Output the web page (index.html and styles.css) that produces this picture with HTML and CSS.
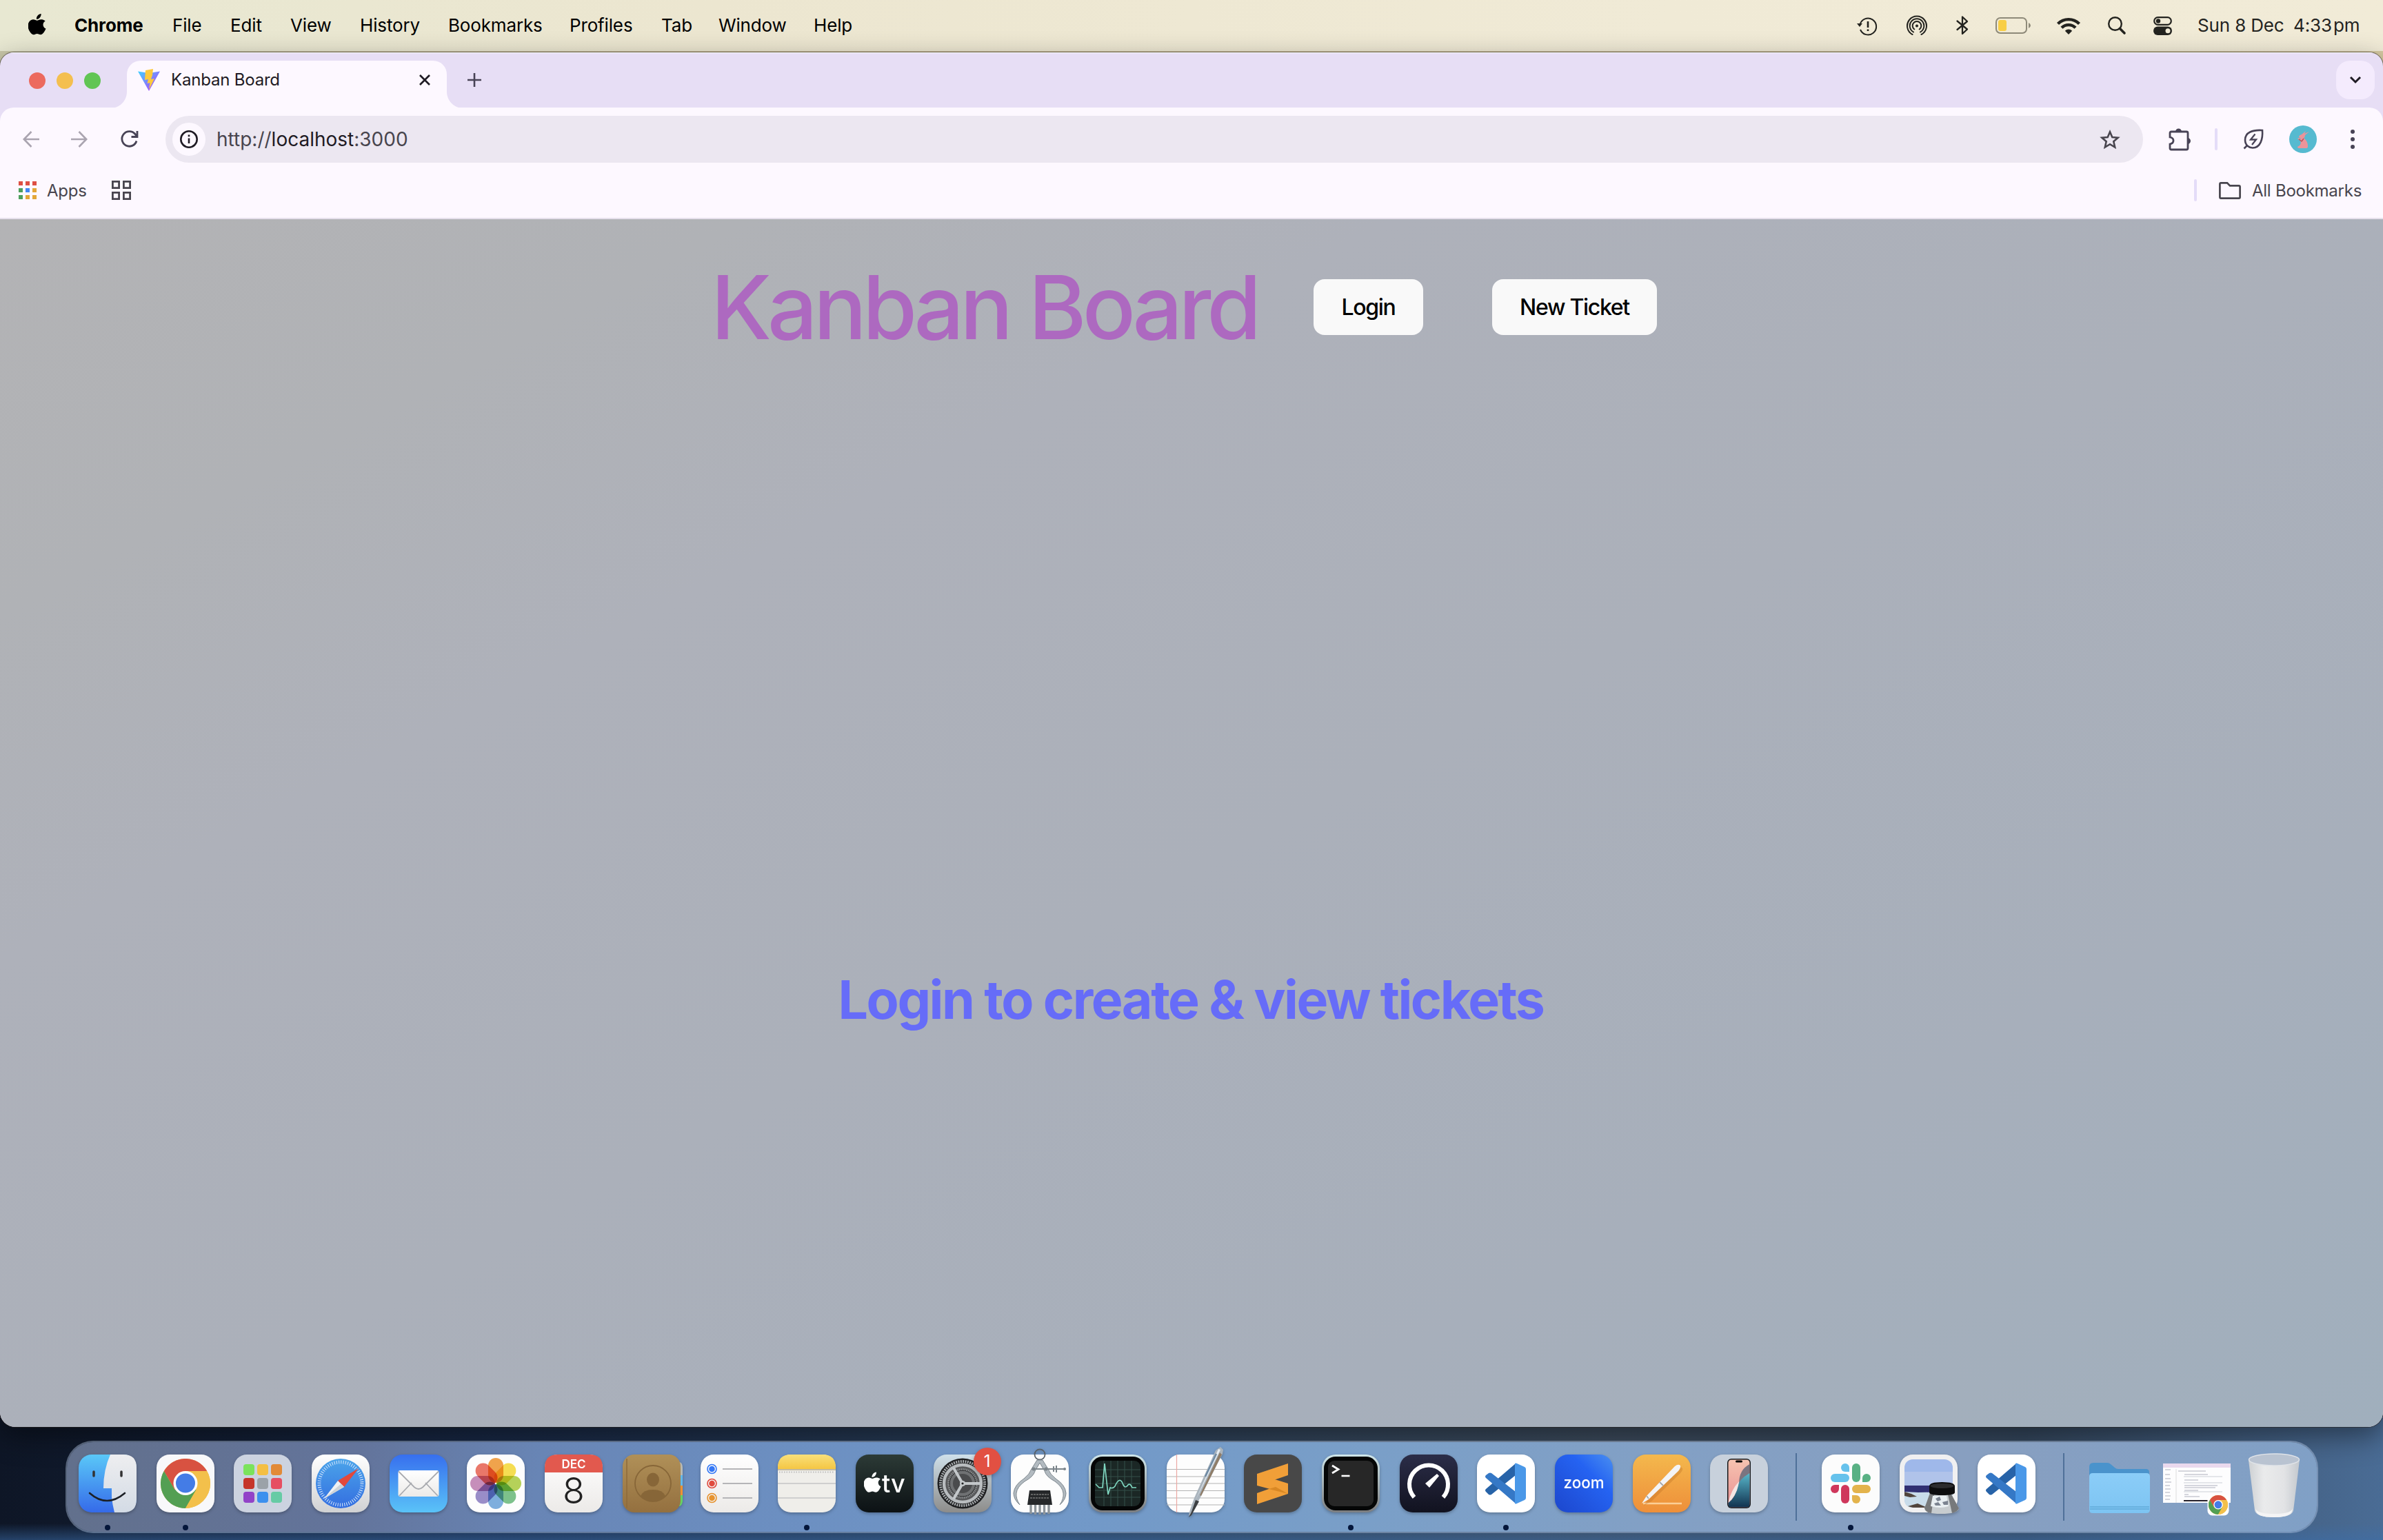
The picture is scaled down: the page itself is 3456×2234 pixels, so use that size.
FILE: index.html
```html
<!DOCTYPE html>
<html lang="en">
<head>
<meta charset="utf-8">
<title>Kanban Board</title>
<link rel="stylesheet" href="styles.css">
</head>
<body>
<svg class="defs" aria-hidden="true">
  <defs>
    <symbol id="apple" viewBox="0 0 26 31"><path d="M18.6 0c.2 2.100-.6 4-1.800 5.400-1.200 1.400-3.100 2.400-4.900 2.300-.2-2 .7-4 1.800-5.200C14.900 1.100 16.900.1 18.600 0zM24.700 10.500c-2 1.200-3.200 3-3.200 5.300 0 2.700 1.600 4.900 4 5.800-.5 1.600-1.300 3.100-2.300 4.500-1.400 2.100-2.800 4.100-5 4.100-2.200.1-2.900-1.300-5.400-1.300s-3.300 1.300-5.300 1.400c-2.200.1-3.800-2.200-5.200-4.200C-.5 22-1.700 16.100 1.200 11.800 2.500 9.600 4.900 8.200 7.300 8.200c2.100 0 4.200 1.500 5.500 1.500s3.700-1.800 6.300-1.500c1.100 0 4 .4 5.600 2.300z"/></symbol>
    <symbol id="chrome" viewBox="0 0 72 72">
      <circle cx="36" cy="36" r="36" fill="#f3c04b"/>
      <path d="M4.800 18A36 36 0 0 1 67.200 18H36L20.400 45z" fill="#d85241"/>
      <path d="M4.800 18A36 36 0 0 0 36 72L51.600 45H20.400z" fill="#539f53"/>
      <path d="M36 72L51.600 45L36 18H67.200A36 36 0 0 1 36 72z" fill="#f3c04b"/>
      <circle cx="36" cy="35.500" r="17.500" fill="#fff"/><circle cx="36" cy="35.500" r="14" fill="#447ce6"/>
    </symbol>
    <symbol id="vscode" viewBox="0 0 84 84">
      <path d="M56 13L13 50q-2 2 0 4l4 4q2 1 4 0L56 30z" fill="#2763a8"/>
      <path d="M56 71L13 34q-2-2 0-4l4-3q2-1 4 0L56 54z" fill="#3578c6"/>
      <path d="M55 13q1-1 3 0l11 5q2 1 2 3v42q0 2-2 3l-11 5q-2 1-3 0z" fill="#4a98e8"/>
    </symbol>
    <linearGradient id="gBlue" x2="0" y2="1"><stop stop-color="#5ac8f8"/><stop offset="1" stop-color="#356ae9"/></linearGradient>
    <linearGradient id="gMail" x2="0" y2="1"><stop stop-color="#376fee"/><stop offset="1" stop-color="#5ac3f8"/></linearGradient>
    <linearGradient id="gWhite" x2="0" y2="1"><stop stop-color="#fff"/><stop offset="1" stop-color="#eceae8"/></linearGradient>
    <linearGradient id="gSilver" x2="0" y2="1"><stop stop-color="#fff"/><stop offset="1" stop-color="#d0d1d3"/></linearGradient>
    <linearGradient id="gFace" x2="0" y2="1"><stop stop-color="#eeeef0"/><stop offset="1" stop-color="#d3dbe5"/></linearGradient>
    <linearGradient id="gSafari" x2="0" y2="1"><stop stop-color="#4ba4ea"/><stop offset="1" stop-color="#346ee0"/></linearGradient>
    <linearGradient id="gBrown" x2="0" y2="1"><stop stop-color="#b09058"/><stop offset="1" stop-color="#94703f"/></linearGradient>
    <linearGradient id="gYellow" x2="0" y2="1"><stop stop-color="#f9e07a"/><stop offset="1" stop-color="#f5c643"/></linearGradient>
    <linearGradient id="gTv" x2="0" y2="1"><stop stop-color="#2c3a36"/><stop offset="1" stop-color="#0c1114"/></linearGradient>
    <linearGradient id="gGear" x2="0" y2="1"><stop stop-color="#cfe0ea"/><stop offset="1" stop-color="#8d8c8a"/></linearGradient>
    <linearGradient id="gRim" x2="0" y2="1"><stop stop-color="#cfe6ea"/><stop offset="1" stop-color="#7b7d80"/></linearGradient>
    <linearGradient id="gNavy" x2="0" y2="1"><stop stop-color="#2b2d48"/><stop offset="1" stop-color="#11121f"/></linearGradient>
    <linearGradient id="gZoom" x1="1" y1="0" x2="0" y2="1"><stop stop-color="#4a8ff0"/><stop offset=".35" stop-color="#2563f2"/><stop offset="1" stop-color="#1c46cc"/></linearGradient>
    <linearGradient id="gOrange" x2="0" y2="1"><stop stop-color="#f4b84d"/><stop offset="1" stop-color="#ee8f39"/></linearGradient>
    <linearGradient id="gFolder" x2="0" y2="1"><stop stop-color="#8bcdf8"/><stop offset="1" stop-color="#7dc4f2"/></linearGradient>
    <linearGradient id="gTrash"><stop stop-color="#cdd0d3"/><stop offset=".3" stop-color="#eaebec"/><stop offset=".7" stop-color="#e2e3e5"/><stop offset="1" stop-color="#c3c8ce"/></linearGradient>
    <linearGradient id="gVite" x2="1" y2="1"><stop stop-color="#41d1ff"/><stop offset="1" stop-color="#bd34fe"/></linearGradient>
    <linearGradient id="gPhone" x2="0" y2="1"><stop stop-color="#f6c3b0"/><stop offset="1" stop-color="#e98f93"/></linearGradient>
    <linearGradient id="gSea" x2="0" y2="1"><stop stop-color="#58b7cb"/><stop offset="1" stop-color="#123350"/></linearGradient>
  </defs>
</svg>

<header class="menubar">
  <nav class="menus">
    <svg class="apple" width="26" height="31"><use href="#apple"/></svg>
    <span class="app">Chrome</span><span>File</span><span>Edit</span><span>View</span><span>History</span><span>Bookmarks</span><span>Profiles</span><span>Tab</span><span>Window</span><span>Help</span>
  </nav>
  <div class="status">
    <svg width="30" height="30" viewBox="0 0 30 30" fill="none" stroke="#23231f" stroke-width="2"><path d="M4.500 13.500A12 12 0 1 1 5 21"/><path d="M0 12h8l-4 5z" fill="#23231f" stroke="none"/><path d="M16 9v9M16 20.500v2.500" stroke-width="2.600"/></svg>
    <svg width="32" height="30" viewBox="0 0 32 30" fill="none" stroke="#23231f" stroke-width="2" stroke-linecap="round"><path d="M9.500 28A14 14 0 1 1 22.500 28M11 24.500A10.300 10.300 0 1 1 21 24.500M12.300 20.500a6.300 6.300 0 1 1 7.400 0"/><circle cx="16" cy="15.500" r="1.600" fill="#23231f" stroke-width="1"/></svg>
    <svg width="18" height="28" viewBox="0 0 18 28" fill="none" stroke="#23231f" stroke-width="2.300" stroke-linejoin="round" stroke-linecap="round"><path d="M1.500 7.500L16 19.500 9 26V1.500L16 8 1.500 20"/></svg>
    <svg width="52" height="24" viewBox="0 0 52 24"><rect x="1" y="1" width="44" height="22" rx="6" fill="none" stroke="#8e8a79" stroke-width="2"/><rect x="4" y="4" width="12" height="16" rx="3" fill="#f8ce45"/><path d="M48 8q3 1.500 3 4t-3 4z" fill="#8e8a79"/></svg>
    <svg width="34" height="25" viewBox="0 0 34 25" fill="none" stroke="#23231f" stroke-width="4.400"><path d="M1.500 9.500a22 22 0 0 1 31 0M7 15.200a14.200 14.200 0 0 1 20 0"/><path d="M17 25l-5.200-5.200a7.300 7.300 0 0 1 10.400 0z" fill="#23231f" stroke="none"/></svg>
    <svg width="26" height="26" viewBox="0 0 26 26" fill="none" stroke="#23231f"><circle cx="10.500" cy="10.500" r="9.300" stroke-width="2.400"/><path d="M17.500 17.500l6.500 6.500" stroke-width="3.600" stroke-linecap="round"/></svg>
    <svg width="27" height="27" viewBox="0 0 27 27"><rect x="1.200" y="1.200" width="24.600" height="10.600" rx="5.300" fill="none" stroke="#23231f" stroke-width="2.200"/><circle cx="7" cy="6.500" r="3.200" fill="#23231f"/><rect y="14.500" width="27" height="12.500" rx="6.200" fill="#23231f"/><circle cx="21" cy="20.700" r="3.500" fill="#f0ead6"/></svg>
    <span class="date">Sun 8 Dec</span><span class="time">4:33 pm</span>
  </div>
</header>

<main class="window">
  <div class="tabstrip">
    <div class="lights"><i class="red"></i><i class="amber"></i><i class="green"></i></div>
    <div class="tab">
      <svg width="32" height="32" viewBox="0 0 32 32"><path d="M0 3.500L16 32 32 3.500 16 6z" fill="url(#gVite)"/><path d="M22 0l-11 2-1 14 5-1-1.500 6 4-1L16 30l8-16-5 1 2-6z" fill="#fdca3d"/></svg>
      <span class="title">Kanban Board</span>
      <svg width="16" height="16" viewBox="0 0 16 16" stroke="#1f1b24" stroke-width="2.700"><path d="M1 1l14 14M15 1L1 15"/></svg>
    </div>
    <svg class="plus" width="20" height="20" viewBox="0 0 20 20" stroke="#484356" stroke-width="2.600"><path d="M10 0v20M0 10h20"/></svg>
    <div class="tabsearch"><svg width="18" height="12" viewBox="0 0 18 12" fill="none" stroke="#1f1b24" stroke-width="3"><path d="M2 2l7 7 7-7"/></svg></div>
  </div>

  <div class="toolbar">
    <svg width="24" height="24" viewBox="0 0 24 24" fill="none" stroke="#aaa4b0" stroke-width="2.600"><path d="M24 12H2M12.500 1L1.800 12l10.700 11"/></svg>
    <svg width="24" height="24" viewBox="0 0 24 24" fill="none" stroke="#aaa4b0" stroke-width="2.600"><path d="M0 12h22M11.500 1l10.700 11-10.700 11"/></svg>
    <svg width="26" height="26" viewBox="0 0 26 26" fill="none" stroke="#484356" stroke-width="2.800"><path d="M23 15.500A10.800 10.800 0 1 1 21 5.500L23.500 8.500"/><path d="M24 1v8.500h-8.500"/></svg>
    <div class="omnibox">
      <div class="info"><svg width="28" height="28" viewBox="0 0 28 28"><circle cx="14" cy="14" r="11.700" fill="none" stroke="#1f1b24" stroke-width="2.600"/><path d="M14 12.500v7.500M14 7.500v2.800" stroke="#1f1b24" stroke-width="2.600"/></svg></div>
      <div class="url">http://<b>localhost</b>:3000</div>
      <svg width="30" height="29" viewBox="0 0 30 29" fill="none" stroke="#48454e" stroke-width="2.600"><path d="M15 3.300l3.300 7.800 8.300.7-6.300 5.500 1.900 8.200L15 21.200l-7.200 4.300 1.900-8.200-6.300-5.500 8.300-.7z"/></svg>
    </div>
    <svg class="ext" width="34" height="34" viewBox="0 0 34 34"><path d="M5 6h22q2 0 2 2v22q0 2-2 2H5q-2 0-2-2v-6q5-1 5-5t-5-5V8q0-2 2-2z" fill="none" stroke="#484356" stroke-width="2.800"/><path d="M11 6a4.500 4.500 0 0 1 9 0zM28.500 15a4.500 4.500 0 0 1 0 9z" fill="#484356"/></svg>
    <i class="rule"></i>
    <svg class="leaf" width="30" height="30" viewBox="0 0 30 30" fill="none" stroke="#484356" stroke-width="2.600"><path d="M28 2C14 1 3 5 3 16c0 8 6 11.500 11 11.500C25 27.500 29 15 28 2zM6.500 23.500L1.500 28.500"/><path d="M17.500 7.500l-6.500 8h8l-6 7.500" stroke-width="2.300"/></svg>
    <svg class="avatar" width="40" height="40" viewBox="0 0 40 40"><circle cx="20" cy="20" r="20" fill="#56bad0"/><path d="M14 17q0-3 4-4l6-5-2 4 7-3-6 5q0 3-2 4 6 5 6 12 0 3-2 3H15q-3 0-3-2l3-2q3-3 1-7l-4-3 2-1 3 2-1-2z" fill="#eb949a"/><path d="M14 20l4 3 3-4" fill="none" stroke="#b8525b" stroke-width="1.500"/></svg>
    <svg class="kebab" width="6" height="30" viewBox="0 0 6 30" fill="#484356"><circle cx="3" cy="4" r="3"/><circle cx="3" cy="15" r="3"/><circle cx="3" cy="26" r="3"/></svg>
  </div>

  <div class="bookmarks">
    <svg width="26" height="26" viewBox="0 0 26 26"><path d="M0 0h6v6H0zM10 0h6v6h-6zM20 0h6v6h-6z" fill="#de5044"/><path d="M0 10h6v6H0zM0 20h6v6H0z" fill="#4e9f5c"/><path d="M10 10h6v6h-6z" fill="#4387f4"/><path d="M20 10h6v6h-6zM10 20h6v6h-6zM20 20h6v6h-6z" fill="#e3a738"/></svg>
    <span class="apps">Apps</span>
    <svg width="28" height="28" viewBox="0 0 28 28" fill="none" stroke="#48454e" stroke-width="2.800"><path d="M1.400 1.400h9.200v9.200H1.400zM17.400 1.400h9.200v9.200h-9.200zM1.400 17.400h9.200v9.200H1.400zM17.400 17.400h9.200v9.200h-9.200z"/></svg>
    <i class="rule"></i>
    <svg class="folder" width="32" height="25" viewBox="0 0 32 25" fill="none" stroke="#48454e" stroke-width="2.700"><path d="M3 1.400h9l4 4h13q1.600 0 1.600 1.600v15q0 1.600-1.600 1.600H3q-1.600 0-1.600-1.600V3Q1.400 1.400 3 1.400z"/></svg>
    <span class="all">All Bookmarks</span>
  </div>

  <section class="page">
    <div class="head">
      <h1>Kanban Board</h1>
      <button class="login">Login</button>
      <button class="ticket">New Ticket</button>
    </div>
    <h2>Login to create &amp; view tickets</h2>
  </section>
</main>

<footer class="dockarea">
  <div class="dock">
    <div class="item run"><svg viewBox="0 0 84 84"><rect width="84" height="84" rx="19" fill="url(#gBlue)"/><path d="M46 0h19q19 0 19 19v46q0 19-19 19H52q-3-12-4-22V49H36q0-27 10-49z" fill="url(#gFace)"/><path d="M22 25v6M62 25v6" stroke="#333" stroke-width="3.500" stroke-linecap="round"/><path d="M16 56q25 22 51 0" fill="none" stroke="#1c2026" stroke-width="2.600" stroke-linecap="round"/></svg></div>
    <div class="item run"><svg viewBox="0 0 84 84"><rect width="84" height="84" rx="19" fill="#f8f8fa"/><use href="#chrome" x="6" y="6" width="72" height="72"/></svg></div>
    <div class="item"><svg viewBox="0 0 84 84"><rect width="84" height="84" rx="19" fill="#ccd3e0"/><rect x="14" y="14" width="16" height="16" rx="4" fill="#7be35c"/><rect x="34" y="14" width="16" height="16" rx="4" fill="#f4bf43"/><rect x="54" y="14" width="16" height="16" rx="4" fill="#e28a37"/><rect x="14" y="34" width="16" height="16" rx="4" fill="#c5352a"/><rect x="34" y="34" width="16" height="16" rx="4" fill="#9ba2a8"/><rect x="54" y="34" width="16" height="16" rx="4" fill="#e64f62"/><rect x="14" y="54" width="16" height="16" rx="4" fill="#9243c8"/><rect x="34" y="54" width="16" height="16" rx="4" fill="#3c90ee"/><rect x="54" y="54" width="16" height="16" rx="4" fill="#66cba5"/></svg></div>
    <div class="item"><svg viewBox="0 0 84 84"><rect width="84" height="84" rx="19" fill="url(#gSilver)"/><circle cx="42" cy="42" r="36" fill="url(#gSafari)"/><circle cx="42" cy="42" r="31" fill="none" stroke="#d7e8fb" stroke-width="5" stroke-dasharray="1 2.250"/><path d="M68 20L47 47 38 38z" fill="#e2483c"/><path d="M18 64L38 38l9 9z" fill="#f1f1f3"/><path d="M18 64l29-17-4.500-4.500z" fill="#cfd3d8"/></svg></div>
    <div class="item"><svg viewBox="0 0 84 84"><rect width="84" height="84" rx="19" fill="url(#gMail)"/><rect x="12.500" y="23" width="59" height="38" rx="3" fill="url(#gWhite)"/><path d="M14 60l18-19M70 60L52 41M13 24.500l23 23q6 5 12 0l23-23" fill="none" stroke="#a9abb0" stroke-width="1.800"/></svg></div>
    <div class="item"><svg viewBox="0 0 84 84"><rect width="84" height="84" rx="19" fill="#fdfdfd"/><g class="petals"><rect x="31" y="5" width="22" height="36" rx="11" fill="#f19a38"/><rect x="31" y="5" width="22" height="36" rx="11" fill="#f6dc3f" transform="rotate(45 42 42)"/><rect x="31" y="5" width="22" height="36" rx="11" fill="#afcf48" transform="rotate(90 42 42)"/><rect x="31" y="5" width="22" height="36" rx="11" fill="#70bd80" transform="rotate(135 42 42)"/><rect x="31" y="5" width="22" height="36" rx="11" fill="#71a7dc" transform="rotate(180 42 42)"/><rect x="31" y="5" width="22" height="36" rx="11" fill="#8f82c4" transform="rotate(225 42 42)"/><rect x="31" y="5" width="22" height="36" rx="11" fill="#c283b5" transform="rotate(270 42 42)"/><rect x="31" y="5" width="22" height="36" rx="11" fill="#e9695a" transform="rotate(315 42 42)"/></g></svg></div>
    <div class="item"><svg viewBox="0 0 84 84"><rect width="84" height="84" rx="19" fill="url(#gWhite)"/><path d="M0 26v-7Q0 0 19 0h46q19 0 19 19v7z" fill="#e2594e"/><text x="42" y="20" class="month">DEC</text><text x="42" y="71" class="day">8</text></svg></div>
    <div class="item"><svg viewBox="0 0 84 84"><path d="M80 11h3q4 2 4 8v11h-7z" fill="#b9b9b2"/><path d="M80 30h7v15h-7z" fill="#62b8ea"/><path d="M80 45h7v14h-7z" fill="#ee9234"/><path d="M80 59h7v8q0 5-4 8h-3z" fill="#66d162"/><rect width="84" height="84" rx="17" fill="url(#gBrown)"/><path d="M6 6v72" stroke="#8c6a3a" stroke-width="1.500"/><g fill="none" stroke="#876638" stroke-width="1.800"><circle cx="44" cy="42" r="26"/></g><ellipse cx="44" cy="36.500" rx="9" ry="10" fill="#876638"/><path d="M26 60q4-9 18-9t18 9q-7 8-18 8t-18-8z" fill="#876638"/></svg></div>
    <div class="item"><svg viewBox="0 0 84 84"><rect width="84" height="84" rx="19" fill="url(#gWhite)"/><g fill="none" stroke-width="1.600"><circle cx="16.500" cy="21" r="6.500" stroke="#3478f6"/><circle cx="16.500" cy="42" r="6.500" stroke="#e04b3e"/><circle cx="16.500" cy="63" r="6.500" stroke="#e6932f"/></g><circle cx="16.500" cy="21" r="4.300" fill="#3478f6"/><circle cx="16.500" cy="42" r="4.300" fill="#e04b3e"/><circle cx="16.500" cy="63" r="4.300" fill="#e6932f"/><path d="M32 21h43M32 42h43M32 63h43" stroke="#b5b5b8" stroke-width="2"/></svg></div>
    <div class="item run"><svg viewBox="0 0 84 84"><rect width="84" height="84" rx="19" fill="#efeeea"/><path d="M0 21v-2Q0 0 19 0h46q19 0 19 19v2z" fill="url(#gYellow)"/><path d="M0 22h84" stroke="#b4a98a" stroke-width="1.500"/><path d="M2 25.500h80" stroke="#bbb" stroke-width="2" stroke-dasharray="1.500 2"/><path d="M0 42h84M0 63h84" stroke="#cfcfcf" stroke-width="1.800"/></svg></div>
    <div class="item"><svg viewBox="0 0 84 84"><rect width="84" height="84" rx="19" fill="url(#gTv)"/><use href="#apple" x="12" y="25" width="25" height="31" fill="#fff"/><text x="38" y="55" class="tv">tv</text></svg></div>
    <div class="item"><svg viewBox="0 0 84 84"><rect width="84" height="84" rx="19" fill="url(#gGear)"/><circle cx="42" cy="42" r="36.500" fill="#1e1f21"/><circle cx="42" cy="42" r="32" fill="none" stroke="#a9adb0" stroke-width="4" stroke-dasharray="1.900 1.450"/><circle cx="42" cy="42" r="27" fill="#57585a" stroke="#b8bcbf" stroke-width="4.500"/><circle cx="42" cy="42" r="19" fill="#6f7173" stroke="#2c2d2f" stroke-width="1.500"/><circle cx="42" cy="42" r="20.500" fill="none" stroke="#8e9193" stroke-width="3" stroke-dasharray="1.300 1.300"/><circle cx="42" cy="42" r="14" fill="#4a4b4d"/><path d="M42 42h26M42 42L29 19.500M42 42L29 64.500" stroke="#c3c7ca" stroke-width="4"/><circle cx="42" cy="42" r="4" fill="#c3c7ca"/><circle cx="42" cy="42" r="1.600" fill="#222"/></svg><span class="badge">1</span></div>
    <div class="item"><svg viewBox="0 0 84 84"><rect width="84" height="84" rx="19" fill="#fdfdfd"/><circle cx="42" cy="0" r="7.500" fill="none" stroke="#59626a" stroke-width="1.800"/><path d="M38 8L30 21q-3 8-11 14Q5 44 4 56q0 9 9 17-6-9-5-17 1-9 12-17 13-7 15-15l7-12 7 12q2 8 15 15 11 8 12 17 1 8-5 17 9-8 9-17-1-12-15-21-8-6-11-14L46 8z" fill="#b2bac0" stroke="#7d878e" stroke-width="1"/><path d="M30 21h48M62 17v8M66 16v10" stroke="#7b848a" stroke-width="2"/><circle cx="33" cy="21" r="2.500" fill="#7b848a"/><circle cx="51" cy="21" r="2.500" fill="#7b848a"/><circle cx="78" cy="21" r="2" fill="#7b848a"/><path d="M27 52h30l3 21H24z" fill="#26282a"/><path d="M29 58h26M28 63h28" stroke="#777" stroke-width="1.500" stroke-dasharray="3 1"/><path d="M29 73v13M35.500 73v14M42 73v14M48.500 73v14M55 73v13" stroke="#8d9499" stroke-width="3.400"/></svg></div>
    <div class="item"><svg viewBox="0 0 84 84"><rect width="84" height="84" rx="20" fill="url(#gRim)"/><rect x="3" y="3" width="78" height="78" rx="17" fill="#050606"/><rect x="9" y="9" width="66" height="66" rx="9" fill="#1b2725"/><path d="M9 22h66M9 32h66M9 42h66M9 52h66M9 62h66M22 9v66M32 9v66M42 9v66M52 9v66M62 9v66" stroke="#34504a" stroke-width="1"/><path d="M10 43l5 5h5l3-35 5 45 3-10q4 2 7-2 7-16 12-2 3 6 7 0 3-3 6 4h6" fill="none" stroke="#7fd6c0" stroke-width="1.700"/></svg></div>
    <div class="item"><svg viewBox="0 0 84 84"><rect width="84" height="84" rx="19" fill="#fdfdfd"/><path d="M0 21.500h84M0 32h84M0 42h84M0 52.500h84M0 63h84M0 73h84" stroke="#b3b3b3" stroke-width="1.200"/><path d="M14.500 0v84" stroke="#eca9a4" stroke-width="1.200"/><path d="M71-6l7-5 4 4-1 6-32 63-13 24-4 3 1-6 7-20z" fill="#aab4bd"/><path d="M75-8l3 1-31 63-5 10z" fill="#e7eef3"/><path d="M80 0L50 60l-2-1L77-3z" fill="#8f7d68"/><path d="M36 83l6-17 5 2-11 20-4 3z" fill="#3d4043"/><path d="M72-1L56 32" stroke="#6e8aa4" stroke-width="2.500"/></svg></div>
    <div class="item"><svg viewBox="0 0 84 84"><rect width="84" height="84" rx="19" fill="#484848"/><path d="M19 28l45-15v17L45 36.500 19 45z" fill="#f19f38"/><path d="M19 28v17l45 12V42z" fill="#f19f38"/><path d="M36 50l28-8v15L19 72V56z" fill="#f19f38"/><path d="M36 50l10-3 18 10z" fill="#d98824"/></svg></div>
    <div class="item run"><svg viewBox="0 0 84 84"><rect width="84" height="84" rx="20" fill="url(#gRim)"/><rect x="3" y="3" width="78" height="78" rx="17" fill="#050606"/><rect x="9" y="9" width="66" height="66" rx="9" fill="#272727"/><path d="M15 16l9 5.500-9 5.500" fill="none" stroke="#fff" stroke-width="2.800"/><path d="M28.500 31h12" stroke="#fff" stroke-width="2.600"/></svg></div>
    <div class="item"><svg viewBox="0 0 84 84"><rect width="84" height="84" rx="19" fill="url(#gNavy)"/><path d="M21 62a28 28 0 1 1 42 0" fill="none" stroke="#fff" stroke-width="6"/><path d="M54 28l3 3-14 17-6-6z" fill="#fff"/></svg></div>
    <div class="item run"><svg viewBox="0 0 84 84"><rect width="84" height="84" rx="19" fill="#fff"/><use href="#vscode"/></svg></div>
    <div class="item"><svg viewBox="0 0 84 84"><rect width="84" height="84" rx="19" fill="url(#gZoom)"/><text x="42" y="48.500" class="zoom" textLength="59" lengthAdjust="spacingAndGlyphs">zoom</text></svg></div>
    <div class="item"><svg viewBox="0 0 84 84"><rect width="84" height="84" rx="19" fill="url(#gOrange)"/><path d="M15 71h56" stroke="#fbcf96" stroke-width="2.600"/><path d="M69 17q-3-4-8 1L21 60l-8 11 11-6 41-40q5-5 4-8z" fill="#a85a18" opacity=".25" transform="translate(3 3)"/><path d="M69 16q-3-3-8 1L20 60l-7 11 10-6 42-40q5-5 4-9z" fill="#f4f4f5"/><path d="M39 40l5 5M20 60l3 4" stroke="#a5a8ab" stroke-width="1.800"/></svg></div>
    <div class="item"><svg viewBox="0 0 84 84"><rect width="84" height="84" rx="19" fill="#c8d1dc"/><rect x="25" y="6" width="34" height="72" rx="6" fill="#15181b"/><rect x="26.500" y="7.500" width="31" height="69" rx="4.500" fill="url(#gPhone)"/><path d="M57.500 14Q42 22 42 42l15.500-15z" fill="#7b7480"/><path d="M57.500 27Q42 36 40 46q-4 18-13.500 24v2q0 4.500 4.500 4.500h22q4.500 0 4.500-4.500z" fill="url(#gSea)"/><path d="M42 39Q30 52 26.500 70 38 60 41 45z" fill="#f3e6e4"/><rect x="37" y="8.500" width="10" height="3" rx="1.500" fill="#000"/></svg></div>
    <i class="split"></i>
    <div class="item run"><svg viewBox="0 0 84 84"><rect width="84" height="84" rx="19" fill="#fcfcfc"/><path d="M28 19a6 6 0 0 1 12 0v6h-6a6 6 0 0 1-6-6z" fill="#66c2ec"/><rect x="13" y="28" width="27" height="12" rx="6" fill="#66c2ec"/><rect x="44" y="13" width="12" height="27" rx="6" fill="#59b184"/><path d="M59 40v-6a6 6 0 1 1 6 6z" fill="#59b184"/><path d="M25 44v6a6 6 0 1 1-6-6z" fill="#cf375c"/><rect x="28" y="44" width="12" height="27" rx="6" fill="#cf375c"/><rect x="44" y="44" width="27" height="12" rx="6" fill="#e3b34c"/><path d="M44 59h6a6 6 0 1 1-6 6z" fill="#e3b34c"/></svg></div>
    <div class="item"><svg viewBox="0 0 84 84"><rect width="84" height="84" rx="19" fill="#f0f0f1"/><rect x="7" y="7" width="70" height="70" rx="12" fill="#9fb8ea"/><path d="M7 25h70v20H7z" fill="#b0c3ea"/><path d="M7 45h70v20H7z" fill="#312f72"/><path d="M7 54l20 1 50-1v11q0 12-12 12H19Q7 77 7 65z" fill="#c9dcea"/><path d="M7 54l10 3 8 4-10 1-8-2zM12 75l14-4 14 6H19z" fill="#51443c"/><path d="M44 56h30l12 22q-2 8-26 8t-24-8z" fill="#c7cccf"/><path d="M44 56l-8 22q2 6 10 7l4-27zM74 56l12 22q-2 5-10 7l-6-27z" fill="#77797b"/><path d="M48 60h20l3 15q-12 4-26 0z" fill="#e9eff2"/><path d="M52 64l6-3 2 5-5 2zM62 69l8-2v6h-6zM50 71l6-2 4 5h-8z" fill="#7b8390"/><path d="M43 46q0-6 18.500-6T80 46v9q0 4-18.500 4T43 55z" fill="#0d0d0e"/><ellipse cx="61.500" cy="45.500" rx="17" ry="3.500" fill="#2c2c2e"/></svg></div>
    <div class="item"><svg viewBox="0 0 84 84"><rect width="84" height="84" rx="19" fill="#fff"/><use href="#vscode"/></svg></div>
    <i class="split second"></i>
    <svg class="wide" width="88" height="74" viewBox="0 0 88 74"><path d="M0 20V6q0-6 6-6h20q3 0 5 2l6 5q2 2 5 2h40q5 0 5 5v10z" fill="#4a93cc"/><path d="M0 20q0-5 5-5h78q5 0 5 5v48q0 5-5 5H5q-5 0-5-5z" fill="url(#gFolder)"/><path d="M1 64h86M1 67h86" stroke="#62abd9" stroke-width="1.500"/></svg>
    <svg class="thumb" width="98" height="76" viewBox="0 0 98 76"><path d="M0 0h98v57H0z" fill="#fdfdfe"/><path d="M0 0h98v6H0z" fill="#ead9ee"/><path d="M19 8v49" stroke="#ddd" stroke-width="1"/><path d="M3 9h8M3 16h7M3 22h8M3 27h9M3 32h7M3 37h8M3 42h7M3 47h8M3 52h7M22 11h40M31 16h34M31 24h20M31 32h48M31 35h45M31 39h20M31 45h6M31 48h22" stroke="#adb0bb" stroke-width="1.200"/><path d="M30 19h56M30 28h56M30 41h56" stroke="#e4e6ea" stroke-width="2"/><path d="M30 54h36" stroke="#25202a" stroke-width="2"/><rect x="64.500" y="44.500" width="31" height="31" rx="7" fill="#fff"/><use href="#chrome" x="66" y="46" width="28" height="28"/></svg>
    <svg class="trash" width="74" height="94" viewBox="0 0 74 94"><path d="M0 10l9 73q2 10 28 10t28-10l9-73z" fill="url(#gTrash)"/><ellipse cx="37" cy="9.500" rx="36.500" ry="8.500" fill="#b9c3d1" stroke="#dfe3e8" stroke-width="1.500"/><path d="M10 80q2 8 27 8t27-8l-1 4q-2 9-26 9t-26-9z" fill="#f4f4f5"/></svg>
  </div>
</footer>
</body>
</html>
```
FILE: styles.css
```css
* { box-sizing: border-box; }

body {
  margin: 0;
  width: 3456px;
  height: 2234px;
  overflow: hidden;
  display: flex;
  flex-direction: column;
  font-family: Inter, "Liberation Sans", sans-serif;
  background:
    linear-gradient(180deg, transparent 0, rgba(60, 110, 170, .5) 100%) 0 2210px / 100% 24px no-repeat,
    linear-gradient(90deg, #0e1626 0, #182845 20%, #2b4059 45%, #3d4c5e 68%, #35485f 85%, #4a6c95 100%) 0 2050px / 100% 184px no-repeat,
    linear-gradient(90deg, #c9c7a9, #cdbf9b 30%, #d5c9a2);
}

svg { display: block; flex: none; overflow: visible; }
.defs { position: absolute; width: 0; height: 0; }

/* menu bar */
.menubar {
  height: 74px;
  flex: none;
  display: flex;
  justify-content: space-between;
  background: linear-gradient(90deg, #e8e8d2 0, #ece6d0 30%, #f0ead6 70%, #f1ebd7 100%);
  font-size: 26px;
  line-height: 74px;
  letter-spacing: -.15px;
  color: #000;
}
.menus {
  display: grid;
  grid-template-columns: 67px 142px 84px 87px 101px 128px 176px 133px 83px 138px 80px;
  padding-left: 41px;
  white-space: nowrap;
}
.menus .apple { margin-top: 20px; }
.menus .app { font-weight: 700; }
.status {
  display: grid;
  grid-template-columns: 71px 73px 57px 89px 74px 66px 64px 139px 130px;
  align-items: center;
  white-space: nowrap;
  color: #23231f;
}
.time { word-spacing: -5px; }

/* browser window */
.window {
  height: 1994px;
  margin-top: 2px;
  flex: none;
  display: flex;
  flex-direction: column;
  background: #e7def5;
  border-radius: 20px 20px 22px 22px;
  overflow: hidden;
  box-shadow: 0 0 0 1px rgba(40, 35, 30, .55), 0 14px 40px rgba(0, 0, 0, .45);
}
.tabstrip { height: 80px; flex: none; display: flex; align-items: flex-start; border-top: 1px solid #fff; }
.lights { display: flex; gap: 16px; padding: 28px 0 0 42px; width: 184px; flex: none; }
.lights i { width: 24px; height: 24px; border-radius: 50%; }
.red { background: #ec6a5e; }
.amber { background: #f4bf4f; }
.green { background: #61c554; }
.tab {
  position: relative;
  width: 464px;
  height: 69px;
  margin-top: 11px;
  padding: 0 24px 14px 16px;
  display: flex;
  align-items: center;
  background: #fdf8ff;
  border-radius: 20px 20px 0 0;
}
.tab::before, .tab::after {
  content: "";
  position: absolute;
  bottom: 0;
  width: 24px;
  height: 24px;
}
.tab::before { left: -24px; background: radial-gradient(circle at 0 0, transparent 23.500px, #fdf8ff 24.500px); }
.tab::after { right: -24px; background: radial-gradient(circle at 100% 0, transparent 23.500px, #fdf8ff 24.500px); }
.title { flex: 1; margin-left: 16px; font-size: 24px; letter-spacing: -.2px; color: #1f1b24; }
.plus { margin: 29px 0 0 30px; }
.tabsearch {
  width: 56px;
  height: 56px;
  margin: 11px 12px 0 auto;
  border-radius: 20px;
  background: #f4ebfd;
  display: flex;
  align-items: center;
  justify-content: center;
}
.toolbar {
  height: 92px;
  flex: none;
  display: grid;
  grid-template-columns: 70px 72px 65px 2904px 68px 41px 67px 89px 20px;
  align-items: center;
  padding-left: 33px;
  background: #fdf8ff;
  border-radius: 20px 20px 0 0;
}
.omnibox {
  width: 2868px;
  height: 68px;
  padding: 0 33px 0 10px;
  display: flex;
  align-items: center;
  border-radius: 34px;
  background: #ece7f1;
}
.info {
  width: 48px;
  height: 48px;
  border-radius: 50%;
  background: #fdf8ff;
  display: flex;
  align-items: center;
  justify-content: center;
}
.url { flex: 1; margin-left: 16px; font-size: 28px; color: #48454e; }
.url b { font-weight: 400; color: #1f1b24; }
.rule { width: 4px; height: 32px; border-radius: 2px; background: #e4dcf8; }
.bookmarks {
  height: 70px;
  flex: none;
  display: flex;
  align-items: center;
  padding: 0 30px 12px 27px;
  background: #fdf8ff;
  border-bottom: 2px solid #e6e0ec;
  font-size: 24px;
  letter-spacing: -.25px;
  color: #48454e;
}
.apps { width: 94px; margin-left: 15px; }
.bookmarks .rule { margin-left: auto; }
.folder { margin: 0 16px 0 32px; }
.all { width: 160px; white-space: nowrap; }

/* application */
.page {
  flex: 1;
  background: linear-gradient(152deg, #b3b3b5 0, #b0b2b6 16%, #aeb1ba 30%, #abb0ba 52%, #a7afbb 76%, #a0afbd 100%);
}
.head {
  display: flex;
  justify-content: center;
  align-items: center;
  height: 255px;
  padding-right: 22px;
}
h1 {
  width: 795px;
  margin: 0 79px 0 0;
  font-size: 128px;
  font-weight: 500;
  line-height: 1;
  letter-spacing: -5.900px;
  white-space: nowrap;
  color: #ad69c0;
}
button {
  height: 81px;
  padding: 0;
  border: 0;
  border-radius: 16px;
  background: #f9f9f9;
  font: 500 32px Inter, sans-serif;
  letter-spacing: -1.300px;
  color: #000;
}
.login { width: 159px; margin-right: 100px; }
.ticket { width: 239px; }
h2 {
  margin: 830px 0 0;
  padding-right: 2px;
  font-size: 77px;
  line-height: 94px;
  font-weight: 700;
  letter-spacing: -2.450px;
  text-align: center;
  color: #666cf8;
}

/* dock */
.dockarea { flex: 1; padding: 20px 94px 10px 95px; }
.dock {
  height: 134px;
  display: flex;
  align-items: flex-start;
  padding: 18px 0 0 17px;
  border: 2px solid rgba(190, 210, 240, .4);
  border-radius: 40px;
  background: linear-gradient(97deg, #62708c 0, #63749b 13%, #6885b5 21%, #6c8fc1 32%, #7299c8 46%, #7a9fc8 58%, #82a0c5 70%, #889fc0 84%, #80a0c6 100%);
  background-clip: padding-box;
}
.item { position: relative; width: 84px; height: 84px; margin-right: 28.700px; flex: none; }
.item > svg { width: 84px; height: 84px; filter: drop-shadow(0 2px 2px rgba(0, 0, 0, .25)); }
.run::after {
  content: "";
  position: absolute;
  left: 38px;
  top: 102px;
  width: 8px;
  height: 8px;
  border-radius: 50%;
  background: #04163a;
}
.badge {
  position: absolute;
  left: 58px;
  top: -10px;
  width: 40px;
  height: 40px;
  border-radius: 50%;
  background: #e25042;
  color: #fff;
  font-size: 24px;
  line-height: 40px;
  text-align: center;
  box-shadow: 0 2px 6px rgba(0, 0, 0, .25);
}
.split { width: 2px; height: 98px; margin: -2px 36px 0 11px; background: #4f7099; flex: none; }
.second { margin: -2px 36px 0 12px; }
.wide { margin-top: 12px; }
.thumb { margin: 13px 0 0 19px; }
.trash { margin: -2px 0 0 26px; }
.petals rect { mix-blend-mode: multiply; opacity: .9; }
text { font-family: Inter, sans-serif; }
.month { font-size: 17px; font-weight: 600; text-anchor: middle; fill: #fff; }
.day { font-size: 52px; font-weight: 300; text-anchor: middle; fill: #222; }
.tv { font-size: 36px; font-weight: 500; fill: #fff; }
.zoom { font-size: 24px; font-weight: 500; text-anchor: middle; fill: #fff; }
```
